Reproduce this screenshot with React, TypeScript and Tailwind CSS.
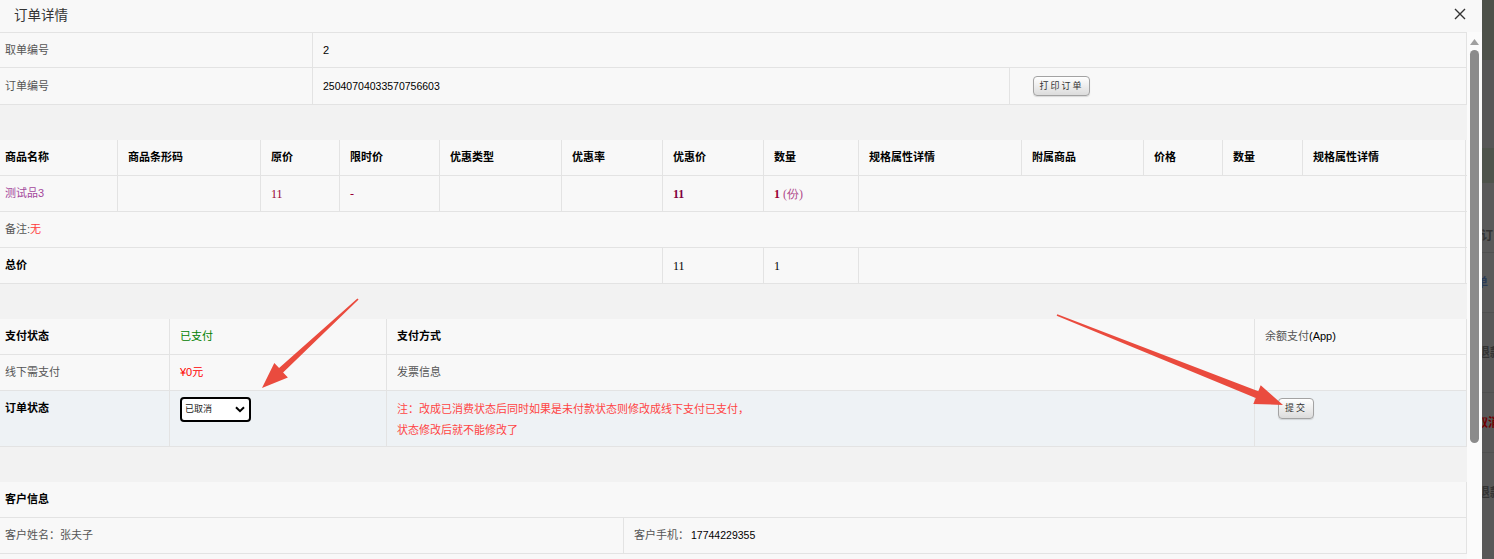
import React from "react";

const B = "border-[#e3e3e3]";

function C({
  children,
  className = "",
  first = false,
}: {
  children?: React.ReactNode;
  className?: string;
  first?: boolean;
}) {
  return (
    <div
      className={`flex items-center border-r border-[#e3e3e3] min-w-0 whitespace-nowrap ${
        first ? "pl-[5px]" : "pl-[10px]"
      } ${className}`}
    >
      {children}
    </div>
  );
}

function Btn({ children, className = "" }: { children: React.ReactNode; className?: string }) {
  return (
    <div
      className={`flex items-center justify-center rounded-[4px] border border-[#a3a3a3] bg-gradient-to-b from-[#ffffff] to-[#dcdcdc] text-[9px] tracking-[2px] text-[#333] shadow-[0_1px_1px_rgba(0,0,0,0.12)] ${className}`}
    >
      {children}
    </div>
  );
}

export default function App() {
  const prodCols =
    "grid-cols-[118px_143px_79px_100px_122px_101px_101px_95px_163px_122px_79px_80px_163px]";
  return (
    <div className="relative flex h-[559px] w-[1494px] overflow-hidden bg-[#585858] font-['Liberation_Sans','Noto_Sans_CJK_SC',sans-serif] text-[11px] leading-none text-black">
      {/* modal */}
      <div className="flex w-[1482px] shrink-0 flex-col bg-[#f8f8f8]">
        {/* title bar */}
        <div className="flex h-[32px] shrink-0 items-center justify-between pl-[14px] pr-[16px]">
          <span className="text-[13.5px] text-[#333]">订单详情</span>
          <svg width="12" height="12" viewBox="0 0 12 12" className="mt-[-4px]">
            <path d="M1 1 L11 11 M11 1 L1 11" stroke="#333" strokeWidth="1.4" />
          </svg>
        </div>
        <div className="flex min-h-0 flex-1">
          {/* content */}
          <div className={`w-[1467px] shrink-0 overflow-hidden border-t ${B}`}>
            {/* order ids */}
            <div className={`grid h-[35px] grid-cols-[313px_1154px] border-b ${B}`}>
              <C first className="text-[#555]">取单编号</C>
              <C>2</C>
            </div>
            <div className={`grid h-[37px] grid-cols-[313px_697px_457px] border-b ${B}`}>
              <C first className="text-[#555]">订单编号</C>
              <C className="text-[10.5px]">25040704033570756603</C>
              <C className="pl-[23px]">
                <Btn className="h-[20px] w-[57px]">打印订单</Btn>
              </C>
            </div>
            <div className="h-[35px] bg-[#f2f2f2]" />

            {/* product table */}
            <div className={`grid h-[36px] ${prodCols} border-b ${B} font-bold`}>
              <C first>商品名称</C>
              <C>商品条形码</C>
              <C>原价</C>
              <C>限时价</C>
              <C>优惠类型</C>
              <C>优惠率</C>
              <C>优惠价</C>
              <C>数量</C>
              <C>规格属性详情</C>
              <C>附属商品</C>
              <C>价格</C>
              <C>数量</C>
              <C>规格属性详情</C>
            </div>
            <div className={`grid h-[36px] ${prodCols} border-b ${B}`}>
              <C first className="text-[#a3479c]">测试品3</C>
              <C />
              <C className="font-['Liberation_Serif',serif] text-[12px] text-[#990033]">11</C>
              <C className="font-['Liberation_Serif',serif] text-[12px] text-[#990033]">-</C>
              <C />
              <C />
              <C className="font-['Liberation_Serif',serif] text-[12px] font-bold text-[#800040]">11</C>
              <C className="font-['Liberation_Serif',serif] text-[12px]">
                <span className="font-bold text-[#990033]">1</span>
                <span className="ml-[3px] text-[#b04a8a]">(份)</span>
              </C>
              <C className="col-span-5" />
            </div>
            <div className={`grid h-[36px] ${prodCols} border-b ${B}`}>
              <C first className="col-span-13 text-[#555]">
                备注:<span className="text-[#ff3b3b]">无</span>
              </C>
            </div>
            <div className={`grid h-[36px] ${prodCols} border-b ${B}`}>
              <C first className="col-span-6 font-bold">总价</C>
              <C className="font-['Liberation_Serif',serif] text-[12px] text-black">11</C>
              <C className="font-['Liberation_Serif',serif] text-[12px] text-black">1</C>
              <C className="col-span-5" />
            </div>
            <div className="h-[35px] bg-[#f2f2f2]" />

            {/* payment */}
            <div className={`grid h-[36px] grid-cols-[170px_217px_868px_212px] border-b ${B}`}>
              <C first className="font-bold">支付状态</C>
              <C className="text-[#008000]">已支付</C>
              <C className="font-bold">支付方式</C>
              <C className="text-[#555]">
                余额支付<span className="text-black">(App)</span>
              </C>
            </div>
            <div className={`grid h-[36px] grid-cols-[170px_217px_868px_212px] border-b ${B}`}>
              <C first className="text-[#555]">线下需支付</C>
              <C className="text-[#ff0000]">¥0元</C>
              <C className="text-[#555]">发票信息</C>
              <C />
            </div>
            <div className={`grid h-[56px] grid-cols-[170px_217px_868px_212px] border-b ${B} bg-[#eef2f5]`}>
              <C first className="items-start pt-[12px] font-bold">订单状态</C>
              <C className="items-start pt-[6px]">
                <div className="flex h-[25px] w-[71px] items-center justify-between rounded-[4px] border-2 border-black bg-white pl-[3px] pr-[4px]">
                  <span className="text-[9px] text-[#222]">已取消</span>
                  <svg width="10" height="7" viewBox="0 0 10 7">
                    <path d="M1 1.2 L5 5.2 L9 1.2" fill="none" stroke="#000" strokeWidth="2" />
                  </svg>
                </div>
              </C>
              <C className="flex-col items-start justify-start gap-[10px] pt-[13px] text-[#ff4444]">
                <span>注：改成已消费状态后同时如果是未付款状态则修改成线下支付已支付，</span>
                <span>状态修改后就不能修改了</span>
              </C>
              <C className="items-start pl-[23px] pt-[7px]">
                <Btn className="h-[21px] w-[36px]">提交</Btn>
              </C>
            </div>
            <div className="h-[35px] bg-[#f2f2f2]" />

            {/* customer */}
            <div className={`grid h-[36px] grid-cols-[1467px] border-b ${B}`}>
              <C first className="font-bold">客户信息</C>
            </div>
            <div className={`grid h-[36px] grid-cols-[624px_843px] border-b ${B}`}>
              <C first className="text-[#555]">客户姓名：张夫子</C>
              <C className="text-[#555]">
                客户手机：<span className="ml-[2px] text-[10.5px] text-black">17744229355</span>
              </C>
            </div>
            <div className="h-[36px]" />
          </div>
          {/* scrollbar */}
          <div className="relative flex w-[15px] shrink-0 flex-col items-center bg-[#fbfbfb]">
            <svg width="9" height="6" viewBox="0 0 9 6" className="mt-[7px]">
              <path d="M0 6 L4.5 0 L9 6 Z" fill="#a0a0a0" />
            </svg>
            <div className="mt-[5px] h-[393px] w-[9px] rounded-[5px] bg-[#8b8b8b]" />
          </div>
        </div>
      </div>

      {/* backdrop strip */}
      <div className="flex w-[12px] shrink-0 flex-col overflow-hidden whitespace-nowrap text-[12px] font-bold">
        <div className="h-[60px] shrink-0 bg-[#4d5149]" />
        <div className="h-[88px] shrink-0 bg-[#575757]" />
        <div className="h-[35px] shrink-0 bg-[#4f544c]" />
        <div className="flex h-[70px] shrink-0 items-end overflow-hidden border-b border-[#505050] bg-[#5a5a5a] pb-[10px]">
          <span className="ml-[-1px] text-[#333]">订</span>
        </div>
        <div className="flex h-[60px] shrink-0 items-center overflow-hidden border-b border-[#505050] bg-[#5a5a5a]">
          <span className="ml-[-6px] text-[#2a3a55]">单</span>
        </div>
        <div className="flex h-[80px] shrink-0 items-center overflow-hidden border-b border-[#505050] bg-[#585858]">
          <span className="ml-[-4px] text-[#333]">退款</span>
        </div>
        <div className="flex h-[60px] shrink-0 items-center overflow-hidden border-b border-[#505050] bg-[#585858]">
          <span className="ml-[-6px] text-[#700000]">取消</span>
        </div>
        <div className="flex h-[80px] shrink-0 items-center overflow-hidden bg-[#585858]">
          <span className="ml-[-4px] text-[#333]">退款</span>
        </div>
      </div>

      {/* annotation arrows */}
      <svg
        className="pointer-events-none absolute left-0 top-0"
        width="1494"
        height="559"
        viewBox="0 0 1494 559"
      >
        <polygon
          points="358.6,299.5 283.1,372.5 287.9,377.6 262,388 274.3,363.0 279.1,368.1 357.4,298.5"
          fill="#ea4b3e"
        />
        <polygon
          points="1056.7,315.8 1255.7,397.9 1253.3,403.9 1283,405 1260.7,385.3 1258.3,391.3 1057.3,314.2"
          fill="#ea4b3e"
        />
      </svg>
    </div>
  );
}
